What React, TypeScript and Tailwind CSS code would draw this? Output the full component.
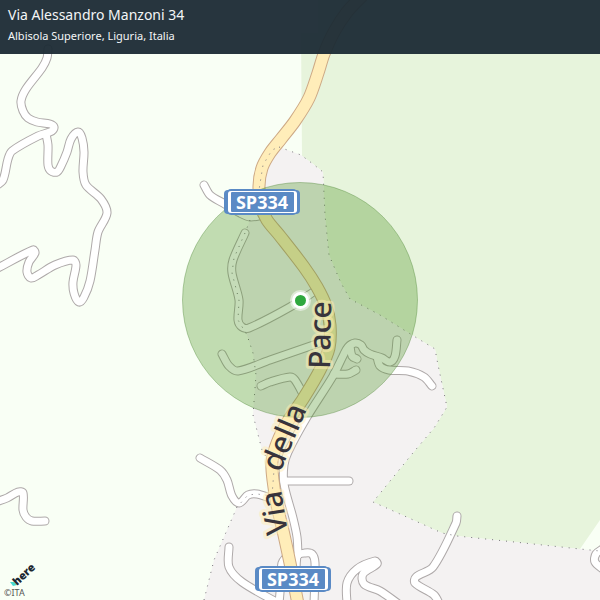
type Point = [number, number];

// Turns surveyed points into a soft curve that passes through all of them.
function curve(points: Point[]): string {
  let d = `M${points[0][0]} ${points[0][1]}`;
  for (let i = 0; i < points.length - 1; i++) {
    const a = points[Math.max(i - 1, 0)];
    const b = points[i];
    const c = points[i + 1];
    const e = points[Math.min(i + 2, points.length - 1)];
    const reach = Math.hypot(c[0] - b[0], c[1] - b[1]);
    const t1 = Math.hypot(c[0] - a[0], c[1] - a[1]) || 1;
    const t2 = Math.hypot(e[0] - b[0], e[1] - b[1]) || 1;
    const k = reach * 0.3;
    d += `C${b[0] + ((c[0] - a[0]) / t1) * k} ${b[1] + ((c[1] - a[1]) / t1) * k} ${c[0] - ((e[0] - b[0]) / t2) * k} ${c[1] - ((e[1] - b[1]) / t2) * k} ${c[0]} ${c[1]}`;
  }
  return d;
}

const streets: Point[][] = [
  [[48, 49], [47, 58], [42, 68], [26, 89], [21, 101], [23, 111], [28, 118], [37, 122], [50, 124], [54, 127], [52, 131], [38, 136], [12, 151], [8, 159], [3, 180], [-4, 186]],
  [[46, 134], [48, 145], [48, 165], [51, 171], [57, 172], [61, 166], [67, 152], [71, 139], [78, 132], [82, 138], [84, 152], [83, 172], [86, 185], [101, 199], [107, 213], [98, 232], [95, 250], [90, 281], [84, 297], [79, 302], [74, 293], [73, 282], [76, 265], [73, 260], [55, 265], [38, 275], [31, 278], [27, 272], [29, 262], [35, 253], [33, 250], [-4, 269]],
  [[-4, 502], [7, 498], [18, 492], [23, 493], [23, 510], [26, 517], [32, 521], [45, 521]],
  [[204, 185], [210, 195], [223, 203], [240, 213], [250, 217], [264, 215]],
  [[245, 233], [233, 260], [232, 273], [239, 300], [238, 320], [242, 327], [249, 328], [290, 307], [318, 289]],
  [[222, 354], [229, 366], [238, 371], [270, 360], [325, 341]],
  [[261, 386], [270, 382], [290, 377], [295, 380], [304, 396]],
  [[334, 374], [348, 374], [356, 370]],
  [[350, 346], [352, 356], [357, 359]],
  [[377, 357], [380, 366], [389, 370], [408, 371], [424, 377], [432, 386]],
  [[284, 481], [349, 481]],
  [[297, 600], [297, 556], [305, 553], [312, 554], [315, 563], [314, 604]],
  [[279, 604], [281, 580], [282, 563], [287, 556]],
  [[298, 555], [297, 537], [293, 518], [284, 484], [284, 465], [288, 452], [307, 417], [333, 376], [343, 356], [348, 347], [355, 343], [361, 345], [364, 350], [370, 354], [382, 358], [390, 362], [395, 356], [397, 340]],
  [[200, 458], [220, 470], [227, 480], [232, 496], [239, 503], [248, 495], [257, 494], [270, 498]],
  [[229, 547], [229, 567], [242, 582], [278, 603]],
  [[347, 604], [347, 583], [357, 569], [375, 561], [377, 564], [363, 574], [364, 584], [380, 591], [400, 605]],
  [[457, 516], [456, 523], [433, 567], [416, 577], [415, 583], [434, 595], [440, 605]],
  [[604, 548], [596, 554], [595, 562], [604, 570]],
];

const mainRoad: Point[] = [[362, -4], [347, 12], [334, 32], [324, 54], [318, 73], [309, 98], [295, 121], [281, 139], [270, 153], [262, 168], [259, 186], [261, 206], [267, 220], [280, 236], [304, 267], [317, 287], [326, 306], [330, 325], [329, 348], [320, 370], [303, 399], [288, 421], [277, 443], [272, 462], [273, 480], [277, 505], [284, 535], [290, 563], [298, 604]];

const boundaries: Point[][] = [
  [[279, 147], [301, 155], [313, 164], [323, 172], [325, 215], [329, 255], [341, 283], [350, 299], [380, 315], [412, 335], [435, 349], [438, 365], [447, 407], [434, 428], [412, 454], [373, 502], [400, 514], [442, 533], [457, 536], [505, 541], [580, 549], [600, 551]],
  [[204, 600], [214, 560], [237, 507], [248, 495], [257, 494], [272, 496], [274, 470], [262, 450], [253, 415], [256, 375], [253, 353], [247, 335], [238, 320], [239, 300], [232, 273], [234, 258], [245, 233], [250, 220], [259, 190], [263, 165], [272, 150], [279, 147]],
];

const line = (p: Point[]) => p.map(([x, y]) => `${x},${y}`).join(" ");

function Shield({ x, y, label }: { x: number; y: number; label: string }) {
  return (
    <g transform={`translate(${x} ${y})`}>
      <rect x="-36" y="-13" width="72" height="26" rx="5" fill="#5a8ac5" />
      <rect x="-38" y="-12" width="76" height="24" rx="4" fill="#5a8ac5" />
      <rect x="-34" y="-11" width="69" height="22" rx="3" fill="#fff" />
      <rect x="-31" y="-10" width="63" height="20" rx="1" fill="#5a8ac5" />
      <text y="7" textAnchor="middle" fill="#fff" className="font-['Open_Sans','Noto_Sans',sans-serif] text-[18px] font-bold">
        {label}
      </text>
    </g>
  );
}

function StreetWord({ x, y, angle, children }: { x: number; y: number; angle: number; children: string }) {
  return (
    <text
      transform={`translate(${x} ${y}) rotate(${angle})`}
      fill="#38343c"
      stroke="#ffedb4"
      strokeOpacity="0.5"
      strokeWidth="6"
      strokeLinejoin="round"
      paintOrder="stroke"
      className="font-['Noto_Sans',sans-serif] text-[30px] font-medium"
    >
      {children}
    </text>
  );
}

function MapCanvas() {
  return (
    <svg viewBox="0 0 600 600" className="block h-auto w-full" role="img" aria-label="Street map">
      <rect width="600" height="600" fill="#f9fff5" />
      <polygon points={`318,-2 318,33 301,33 302,156 ${line(boundaries[0].slice(2, 21))} 600,520 600,-2`} fill="#e7f4dc" />
      <polygon points={`${line(boundaries[0])} 600,600 ${line(boundaries[1])}`} fill="#f4f2f2" />

      <g fill="none" strokeLinecap="round" strokeLinejoin="round">
        {streets.map((s, i) => (
          <path key={i} d={curve(s)} stroke="#aea9a9" strokeWidth="9" />
        ))}
        {streets.map((s, i) => (
          <path key={i} d={curve(s)} stroke="#fff" strokeWidth="7" />
        ))}
        <path d={curve(mainRoad)} stroke="#cda985" strokeWidth="13" />
        <path d={curve(mainRoad)} stroke="#ffedb9" strokeWidth="11" />
        {boundaries.map((b, i) => (
          <polyline key={i} points={line(b)} stroke="#77737a" strokeWidth="1" strokeDasharray="1 6" strokeLinecap="butt" />
        ))}
      </g>

      <circle cx="300" cy="300" r="117.5" fill="#3f8b14" fillOpacity="0.3" stroke="#3f7a24" strokeOpacity="0.35" />

      <StreetWord x={288} y={533} angle={-99}>Via</StreetWord>
      <StreetWord x={280} y={473} angle={-67}>della</StreetWord>
      <StreetWord x={330} y={369} angle={-89}>Pace</StreetWord>
      <Shield x={262} y={202} label="SP334" />
      <Shield x={293} y={579} label="SP334" />

      <circle cx="300.5" cy="300.5" r="10.5" fill="#fff" fillOpacity="0.5" />
      <circle cx="300.5" cy="300.5" r="8.5" fill="#fff" />
      <circle cx="300.5" cy="300.5" r="5.5" fill="#2fa83e" />

      <path d="M10 582l3 4 4-1-3-3z" fill="#48dad0" />
      <text transform="translate(17 586) rotate(-43)" fill="#1c2730" className="font-['Noto_Sans',sans-serif] text-[11px] font-black">
        here
      </text>
    </svg>
  );
}

export default function App() {
  return (
    <main className="relative w-full overflow-hidden bg-[#f9fff5] font-['Noto_Sans','Open_Sans',sans-serif]">
      <MapCanvas />
      <header className="absolute inset-x-0 top-0 flex flex-col gap-1 bg-[#1b2a34]/95 px-2 pt-1 pb-3 text-[#f4f6f7]">
        <h1 className="text-[14px] leading-[22px]">Via Alessandro Manzoni 34</h1>
        <p className="text-[11px] leading-3">Albisola Superiore, Liguria, Italia</p>
      </header>
      <small className="absolute bottom-0 left-1 text-[9px] leading-[14px] text-[#555]">©ITA</small>
    </main>
  );
}
